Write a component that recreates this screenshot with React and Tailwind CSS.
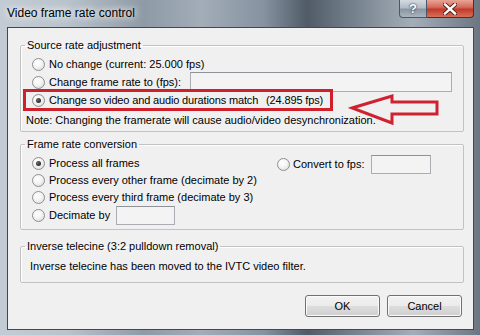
import React from "react";

const Radio = ({ checked }) => (
    <span className="flex h-[13px] w-[13px] shrink-0 items-center justify-center rounded-full border border-[#8e8f8f] bg-[radial-gradient(circle_at_40%_35%,#ffffff_0%,#f4f4f4_45%,#d2d2d2_100%)]">
        {checked && (
            <span className="h-[5px] w-[5px] rounded-full bg-[radial-gradient(circle_at_35%_35%,#6a6a6a,#0f0f0f)]"></span>
        )}
    </span>
);

const Field = ({ className }) => (
    <span className={`block shrink-0 border border-[#abadb3] border-t-[#8f9398] bg-[#f3f3f3] ${className}`}></span>
);

const Row = ({ checked, children, className = "" }) => (
    <div className={`flex items-center gap-[4px] whitespace-nowrap ${className}`}>
        <Radio checked={checked} />
        <span>{children}</span>
    </div>
);

const Group = ({ title, children, className = "" }) => (
    <fieldset
        className={`relative ml-[12px] mr-[9px] rounded-[2px] border border-[#c2c2c2] shadow-[inset_1px_1px_0_#ffffff] ${className}`}
    >
        <legend className="ml-[4px] px-[2px] leading-[14px]">{title}</legend>
        {children}
    </fieldset>
);

const WinButton = ({ children }) => (
    <button className="flex h-[22px] w-[75px] items-center justify-center rounded-[3px] border border-[#707070] bg-[linear-gradient(#f2f2f2_0%,#ebebeb_48%,#dddddd_52%,#cfcfcf_100%)] shadow-[inset_0_0_0_1px_#fbfbfb]">
        {children}
    </button>
);

export default function App() {
    return (
        <div className="flex h-[335px] w-[480px] flex-col overflow-hidden bg-[linear-gradient(90deg,#c3ccd4_0%,#b9c3cc_14%,#8e9aa6_30%,#a2adb8_42%,#8692a0_55%,#505b67_64%,#6f7b87_72%,#a4aeb8_86%,#6b7682_100%)] font-['Liberation_Sans',Arial,sans-serif] text-[11px] text-black">
            {/* title bar */}
            <div className="flex h-[27px] shrink-0 items-start justify-between">
                <span className="ml-[7px] mt-[5px] text-[12px] leading-[16px] [text-shadow:0_0_6px_#ffffff,0_0_10px_#ffffff]">
                    Video frame rate control
                </span>
                <div className="mr-[6px] flex">
                    <div className="flex h-[18px] w-[28px] items-center justify-center rounded-bl-[4px] border border-t-0 border-[#4b5764] bg-[linear-gradient(#d3dae1_0%,#b2bcc6_45%,#8a96a3_55%,#aab4be_100%)] text-[13px] font-bold leading-none text-white [text-shadow:0_0_2px_#2a3440,0_0_1px_#2a3440]">
                        ?
                    </div>
                    <div className="flex h-[18px] w-[47px] items-center justify-center rounded-br-[4px] border border-l-0 border-t-0 border-[#5a2a24] bg-[linear-gradient(#e9a497_0%,#d46b5b_42%,#c2392a_55%,#d9705a_100%)]">
                        <svg width="14" height="12" viewBox="0 0 14 12">
                            <path d="M2 1.5 L12 10.5 M12 1.5 L2 10.5" stroke="#4a1a14" strokeWidth="4.2" strokeLinecap="square" />
                            <path d="M2 1.5 L12 10.5 M12 1.5 L2 10.5" stroke="#ffffff" strokeWidth="2.4" strokeLinecap="square" />
                        </svg>
                    </div>
                </div>
            </div>

            {/* client */}
            <div className="ml-[7px] flex h-[303px] w-[467px] flex-col border border-[#3e4955] bg-[#f0f0f0] pt-[10px]">
                <Group title="Source rate adjustment" className="pb-[2px]">
                    <div className="flex flex-col pt-[3px]">
                        <Row className="h-[18px] pl-[11px]">No change (current: 25.000 fps)</Row>
                        <div className="flex h-[18px] items-center whitespace-nowrap pl-[11px] pr-[11px]">
                            <Radio />
                            <span className="ml-[4px]">Change frame rate to (fps):</span>
                            <Field className="ml-auto h-[20px] w-[262px]" />
                        </div>
                        <div className="relative z-10 -mt-[2px] ml-[2px] flex h-[22px] w-[310px] shrink-0 items-center gap-[4px] whitespace-nowrap border-[3px] border-[#d0202c] pl-[6px] tracking-[-0.15px]">
                            <Radio checked />
                            <span>Change so video and audio durations match</span>
                            <span className="ml-[4px]">(24.895 fps)</span>
                        </div>
                        <div className="flex h-[18px] items-center whitespace-nowrap pl-[5px]">
                            Note: Changing the framerate will cause audio/video desynchronization.
                        </div>
                    </div>
                    <svg
                        className="absolute left-[327px] top-[40px]"
                        width="95"
                        height="35"
                        viewBox="0 0 95 35"
                    >
                        <polygon
                            points="4,16 44,4 44,10 89,10 89,22 44,22 44,31"
                            fill="none"
                            stroke="#cf2230"
                            strokeWidth="3"
                            strokeLinejoin="miter"
                        />
                    </svg>
                </Group>

                <Group title="Frame rate conversion" className="mt-[5px] pb-[4px]">
                    <div className="flex pt-[3px]">
                        <div className="flex w-[256px] flex-col pl-[11px]">
                            <Row checked className="h-[18px]">Process all frames</Row>
                            <Row className="h-[17px]">Process every other frame (decimate by 2)</Row>
                            <Row className="h-[17px]">Process every third frame (decimate by 3)</Row>
                            <div className="flex h-[19px] items-center gap-[4px]">
                                <Radio />
                                <span>Decimate by</span>
                                <Field className="ml-[2px] h-[19px] w-[59px]" />
                            </div>
                        </div>
                        <div className="flex h-[20px] items-center whitespace-nowrap pt-[1px]">
                            <Radio />
                            <span className="ml-[3px]">Convert to fps:</span>
                            <Field className="ml-[6px] h-[19px] w-[60px]" />
                        </div>
                    </div>
                </Group>

                <Group title="Inverse telecine (3:2 pulldown removal)" className="mt-[9px] pb-[7px]">
                    <div className="box-content flex h-[18px] items-center pl-[9px] pt-[4px]">
                        Inverse telecine has been moved to the IVTC video filter.
                    </div>
                </Group>

                <div className="mr-[11px] mt-[12px] flex justify-end gap-[7px]">
                    <WinButton>OK</WinButton>
                    <WinButton>Cancel</WinButton>
                </div>
            </div>
        </div>
    );
}
